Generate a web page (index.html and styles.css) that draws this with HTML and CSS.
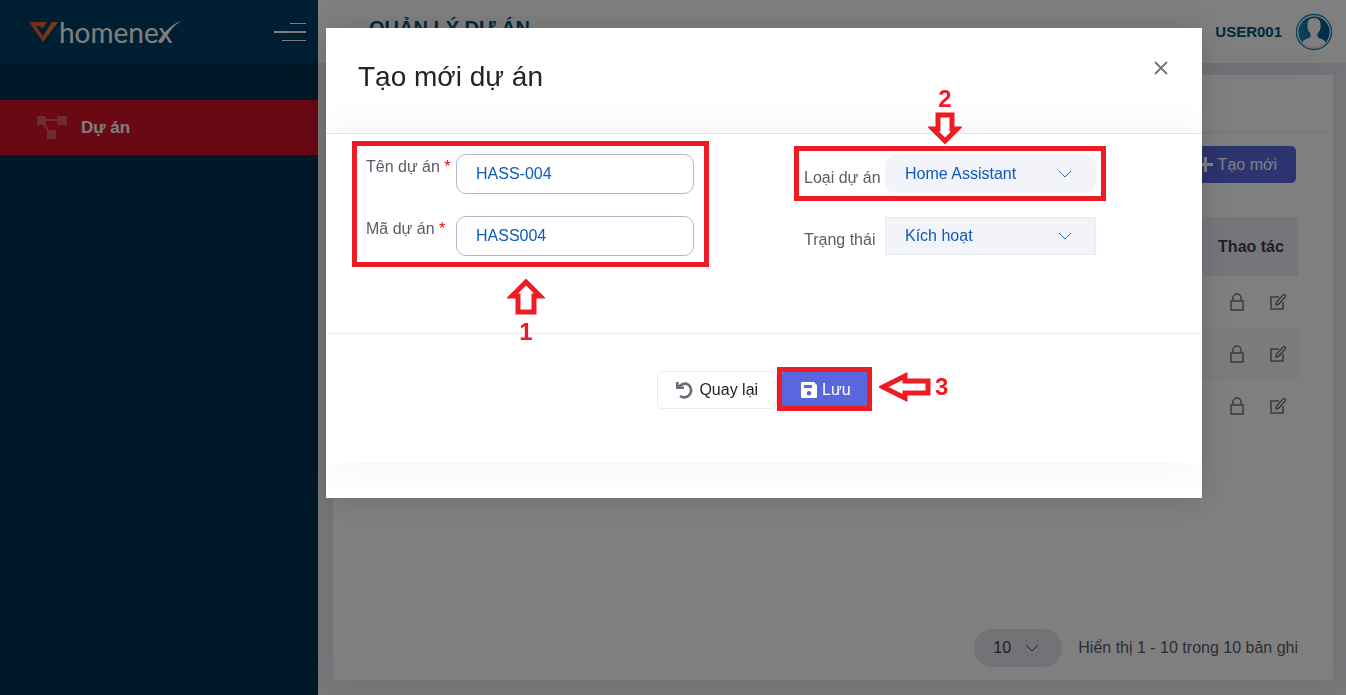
FILE: index.html
```html
<!DOCTYPE html>
<html lang="vi">
<head>
<meta charset="utf-8">
<meta name="viewport" content="width=device-width, initial-scale=1">
<title>Quản lý dự án</title>
<link rel="stylesheet" href="styles.css">
</head>
<body>
<div class="app">
  <aside class="sidebar">
    <div class="brand">
      <a class="logo" href="#" aria-label="homenex">
        <svg class="logo-mark" width="29" height="21" viewBox="0 0 29 21">
          <defs>
            <linearGradient id="mark" x1="0" x2="1"><stop offset="0" stop-color="#f04a2c"/><stop offset="1" stop-color="#e8802f"/></linearGradient>
          </defs>
          <path fill="url(#mark)" d="M0 1H18L13 8L11 5H7L14 15L23 1H29L14 21Z"/>
        </svg>
        <span class="logo-text">homenex</span>
        <svg class="logo-swoosh" width="23" height="21" viewBox="0 0 23 21"><path fill="#fff" d="M23 0C14 3 6 11 0 21H5C8 13 14 6 23 0Z"/></svg>
      </a>
      <button class="toggle" type="button" aria-label="Menu">
        <svg width="32" height="20" viewBox="0 0 32 20"><path fill="#fff" d="M16 1H32V2H16ZM0 9H32V11H0ZM8 18H32V19H8Z"/></svg>
      </button>
    </div>
    <nav class="menu">
      <a class="menu-item" href="#">
        <svg width="30" height="24" viewBox="0 0 30 24"><path fill="#fff" fill-opacity=".3" d="M1 0H8Q9 0 9 1V3H20V1Q20 0 21 0H29Q30 0 30 1V8Q30 9 29 9H21Q20 9 20 8V5H9V8L12 14H18Q19 14 19 15V22Q19 23 18 23H11Q10 23 10 22V15L6 9H1Q0 9 0 8V1Q0 0 1 0Z"/></svg>
        <span>Dự án</span>
      </a>
    </nav>
  </aside>
  <div class="main">
    <header class="topbar">
      <h1>QUẢN LÝ DỰ ÁN</h1>
      <div class="user">
        <span>USER001</span>
        <svg width="38" height="38" viewBox="0 0 38 38">
          <defs>
            <linearGradient id="av" x1="0" x2="1"><stop offset="0" stop-color="#1386bd"/><stop offset="1" stop-color="#005488"/></linearGradient>
            <clipPath id="disc"><circle cx="19" cy="19" r="16"/></clipPath>
          </defs>
          <circle cx="19" cy="19" r="17.5" fill="#fff" stroke="#1386bd" stroke-width="1.4"/>
          <circle cx="19" cy="19" r="15.6" fill="url(#av)"/>
          <path clip-path="url(#disc)" fill="#fff" d="M19 5C14.500 5 12 8 12.500 12.500C12 15 13 18 15 19.500C16 22 16 24 14 25C11 26 8 27 7.500 29C10 33 15 34.500 19 34.500S28 33 30.500 29C30 27 27 26 24 25C22 24 22 22 23 19.500C25 18 26 15 25.500 12.500C26 8 23.500 5 19 5Z"/>
        </svg>
      </div>
    </header>
    <main class="panel">
      <div class="panel-head"></div>
      <div class="panel-body">
        <div class="toolbar">
          <button class="btn btn-primary" type="button">
            <svg width="15" height="15" viewBox="0 0 15 15"><path fill="#fff" d="M6 0H9V6H15V9H9V15H6V9H0V6H6Z"/></svg>
            <span>Tạo mới</span>
          </button>
        </div>
        <table class="projects">
          <thead><tr><td></td><th scope="col">Thao tác</th></tr></thead>
          <tbody>
            <tr><td></td><td><div class="actions">
              <button class="icon-btn" type="button" aria-label="Khóa"><svg width="14" height="18" viewBox="0 0 14 18"><path class="line" d="M1 8H13V17H1ZM3 8V5A4 4 0 0 1 11 5V8"/></svg></button>
              <button class="icon-btn" type="button" aria-label="Sửa"><svg width="17" height="18" viewBox="0 0 17 18"><path class="line" d="M9 4H1V16H13V9M6 12L6.500 9L13 2Q14 1 15 2T15 4L9 11Z"/></svg></button>
            </div></td></tr>
            <tr><td></td><td><div class="actions">
              <button class="icon-btn" type="button" aria-label="Khóa"><svg width="14" height="18" viewBox="0 0 14 18"><path class="line" d="M1 8H13V17H1ZM3 8V5A4 4 0 0 1 11 5V8"/></svg></button>
              <button class="icon-btn" type="button" aria-label="Sửa"><svg width="17" height="18" viewBox="0 0 17 18"><path class="line" d="M9 4H1V16H13V9M6 12L6.500 9L13 2Q14 1 15 2T15 4L9 11Z"/></svg></button>
            </div></td></tr>
            <tr><td></td><td><div class="actions">
              <button class="icon-btn" type="button" aria-label="Khóa"><svg width="14" height="18" viewBox="0 0 14 18"><path class="line" d="M1 8H13V17H1ZM3 8V5A4 4 0 0 1 11 5V8"/></svg></button>
              <button class="icon-btn" type="button" aria-label="Sửa"><svg width="17" height="18" viewBox="0 0 17 18"><path class="line" d="M9 4H1V16H13V9M6 12L6.500 9L13 2Q14 1 15 2T15 4L9 11Z"/></svg></button>
            </div></td></tr>
          </tbody>
        </table>
        <div class="pager">
          <div class="select page-size">
            <select aria-label="Số bản ghi"><option>10</option></select>
            <svg width="14" height="8" viewBox="0 0 14 8"><path d="M1 1L7 7L13 1"/></svg>
          </div>
          <span>Hiển thị 1 - 10 trong 10 bản ghi</span>
        </div>
      </div>
    </main>
  </div>
</div>

<div class="overlay">
  <section class="dialog" role="dialog" aria-modal="true" aria-labelledby="dialog-title">
    <header class="dialog-head">
      <h2 id="dialog-title">Tạo mới dự án</h2>
      <button class="close" type="button" aria-label="Đóng"><svg width="14" height="14" viewBox="0 0 14 14"><path d="M1 1L13 13M13 1L1 13"/></svg></button>
    </header>
    <form class="card">
      <div class="fields">
        <div class="column inputs">
          <div class="field"><label for="name">Tên dự án <b>*</b></label><input id="name" type="text" value="HASS-004"></div>
          <div class="field"><label for="code">Mã dự án <b>*</b></label><input id="code" type="text" value="HASS004"></div>
          <div class="mark mark-inputs"></div>
          <div class="note note-1">
            <svg width="38" height="38" viewBox="0 0 38 38"><path d="M19 4L33 18H27V34H11V18H5Z"/></svg>
            <span>1</span>
          </div>
        </div>
        <div class="column selects">
          <div class="field"><label for="type">Loại dự án</label>
            <div class="select"><select id="type"><option>Home Assistant</option></select><svg width="14" height="8" viewBox="0 0 14 8"><path d="M1 1L7 7L13 1"/></svg></div></div>
          <div class="field"><label for="status">Trạng thái</label>
            <div class="select boxed"><select id="status"><option>Kích hoạt</option></select><svg width="14" height="8" viewBox="0 0 14 8"><path d="M1 1L7 7L13 1"/></svg></div></div>
          <div class="mark mark-type"></div>
          <div class="note note-2">
            <span>2</span>
            <svg width="34" height="34" viewBox="0 0 34 34"><path d="M17 30L29 18H24V4H10V18H5Z"/></svg>
          </div>
        </div>
      </div>
      <div class="buttons">
        <button class="btn btn-back" type="button">
          <svg width="18" height="19" viewBox="0 0 18 19"><path fill="none" stroke="#6c6c7b" stroke-width="2.600" d="M1.300 1V6.700H8M2 6L6 3.500Q8 2.500 10 2.600A7 7 0 1 1 4 15"/></svg>
          <span>Quay lại</span>
        </button>
        <div class="save">
          <button class="btn btn-primary" type="submit">
            <svg width="16" height="16" viewBox="0 0 16 16"><path fill="#fff" fill-rule="evenodd" d="M1 0H13L16 3V15Q16 16 15 16H1Q0 16 0 15V1Q0 0 1 0ZM3 3V6H11V3ZM8 9A2.300 2.300 0 1 0 8 13.600A2.300 2.300 0 1 0 8 9Z"/></svg>
            <span>Lưu</span>
          </button>
          <div class="mark mark-save"></div>
          <div class="note note-3">
            <svg width="52" height="30" viewBox="0 0 52 30"><path d="M4 15L26 4V9H49V21H26V26Z"/></svg>
            <span>3</span>
          </div>
        </div>
      </div>
    </form>
  </section>
</div>
</body>
</html>
```

FILE: styles.css
```css
* { box-sizing: border-box; }

body {
  margin: 0;
  font-family: "Liberation Sans", Arial, sans-serif;
  font-size: 16px;
  line-height: 24px;
  color: #5c5c68;
}

button, input, select { font: inherit; }
button { border: 0; padding: 0; background: none; cursor: pointer; }
svg { display: block; flex: none; }
a { text-decoration: none; color: inherit; }

.app { display: flex; min-height: 100vh; background: #f0f1f6; }

.sidebar { width: 318px; flex: none; background: #003350; color: #fff; }
.brand {
  display: flex;
  align-items: center;
  justify-content: space-between;
  height: 63px;
  padding: 0 12px 0 29px;
  background: #003f66;
}
.logo { display: flex; align-items: center; }
.logo-text { font: 400 28px/40px Lato, sans-serif; margin-left: 1px; }
.logo-swoosh { margin-left: -14px; }
.menu { padding-top: 37px; }
.menu-item {
  display: flex;
  align-items: center;
  gap: 14px;
  height: 55px;
  padding-left: 37px;
  background: #d41228;
  font-size: 17px;
  font-weight: 700;
}

.main { display: flex; flex: 1; flex-direction: column; min-width: 0; }
.topbar {
  display: flex;
  align-items: center;
  justify-content: space-between;
  height: 63px;
  padding: 0 13px 0 51px;
  background: #fff;
  box-shadow: 0 0 40px rgba(82, 63, 105, .1);
}
.topbar h1 { margin: 0 0 8px; font-size: 20px; line-height: 24px; color: #005282; }
.user { display: flex; align-items: center; gap: 13px; font-size: 15px; font-weight: 700; color: #005282; }

.panel {
  display: flex;
  flex: 1;
  flex-direction: column;
  margin: 12px 13px 15px 15px;
  background: #fff;
  box-shadow: 0 0 30px rgba(82, 63, 105, .1);
}
.panel-head { height: 58px; border-bottom: 1px solid #ebedf3; }
.panel-body { display: flex; flex: 1; flex-direction: column; padding: 13px 35px; }
.toolbar { display: flex; justify-content: flex-end; padding-right: 2px; }

.btn {
  display: flex;
  align-items: center;
  justify-content: center;
  gap: 5px;
  height: 37px;
  padding: 0 19px;
  border-radius: 5px;
}
.btn-primary { background: #5867dd; color: #fff; }

.projects { width: 100%; margin-top: 34px; border-collapse: collapse; }
.projects thead { background: #ededf4; color: #3f4047; }
.projects thead tr { height: 59px; }
.projects tbody tr { height: 52px; }
.projects tbody tr:nth-child(even) { background: #f8f8fc; }
.projects th, .projects td { padding: 0; }
.projects th { width: 94px; text-align: center; }
.actions { display: flex; justify-content: center; gap: 26px; padding-left: 14px; }
.line { fill: none; stroke: #74757f; stroke-width: 1.500; }

.select { position: relative; display: flex; align-items: center; }
.select select {
  appearance: none;
  width: 100%;
  height: 38px;
  padding: 0 20px;
  border: 0;
  border-radius: 10px;
  background: #f3f4f9;
  color: #0a5bbd;
}
.select svg { position: absolute; right: 24px; pointer-events: none; fill: none; stroke: #1a73c9; }

.pager { display: flex; align-items: center; justify-content: flex-end; gap: 16px; margin-top: auto; }
.page-size { width: 88px; }
.page-size select { border-radius: 19px; background: #e7e6ef; color: #3f4047; padding: 0 19px; }
.page-size svg { right: 23px; stroke: #3f4047; }

.overlay {
  position: fixed;
  inset: 0;
  padding: 28px 144px 28px 326px;
  background: rgba(0, 0, 0, .5);
  overflow: auto;
}
.dialog {
  padding-bottom: 35px;
  overflow: hidden;
  background: #fff;
  box-shadow: 0 0 30px rgba(0, 0, 0, .15);
}
.dialog-head {
  display: flex;
  align-items: center;
  justify-content: space-between;
  height: 105px;
  padding: 0 34px 8px 32px;
}
.dialog-head h2 { margin: 0; font-size: 28px; font-weight: 400; line-height: 36px; color: #212529; }
.close { margin-bottom: 18px; }
.close svg { fill: none; stroke: #777; stroke-width: 2; }

.card {
  position: relative;
  background: #fff;
  border-top: 1px solid #e4e4e4;
  box-shadow: 0 0 40px rgba(0, 0, 0, .06);
}
.fields {
  display: grid;
  grid-template-columns: repeat(2, minmax(0, 1fr));
  height: 200px;
  border-bottom: 1px solid #ebebeb;
}
.column { position: relative; display: flex; flex-direction: column; gap: 22px; padding: 20px 0 0 40px; }
.inputs { padding-right: 70px; }
.selects { padding-right: 106px; }
.field { display: flex; }
.field label { flex: none; width: 90px; line-height: 26px; }
.field label b { color: #f00; font-weight: 400; }
.selects label { width: 81px; padding-top: 11px; white-space: nowrap; }
.field input {
  flex: 1;
  min-width: 0;
  height: 40px;
  padding: 0 19px;
  border: 1px solid #b2b8cb;
  border-radius: 10px;
  background: #fff;
  color: #0a5bbd;
}
.field .select { flex: 1; height: 40px; }
.boxed select { border: 1px solid #ebecf1; border-radius: 1px; padding: 0 19px; }

.buttons { display: flex; justify-content: center; gap: 4px; padding: 37px 0 54px; }
.buttons .btn { height: 38px; }
.btn-back { border: 1px solid #ebebef; color: #212529; padding: 0 18px; }
.save { position: relative; }
.save .btn { padding: 0 20px; }

.mark { position: absolute; border: 5px solid #ed1c24; pointer-events: none; }
.mark-inputs { inset: 7px 55px auto 26px; height: 126px; }
.mark-type { inset: 12px 96px auto 30px; height: 55px; }
.mark-save { inset: -4px -1px -2px -4px; }

.note {
  position: absolute;
  display: flex;
  align-items: center;
  font-size: 24px;
  font-weight: 700;
  color: #ed1c24;
  pointer-events: none;
}
.note svg { fill: #fff; stroke: #ed1c24; stroke-width: 5; }
.note-1 { flex-direction: column; gap: 4px; top: 144px; left: 181px; }
.note-2 { flex-direction: column; top: -47px; left: 164px; }
.note-3 { top: 1px; left: 98px; gap: 4px; }
```
